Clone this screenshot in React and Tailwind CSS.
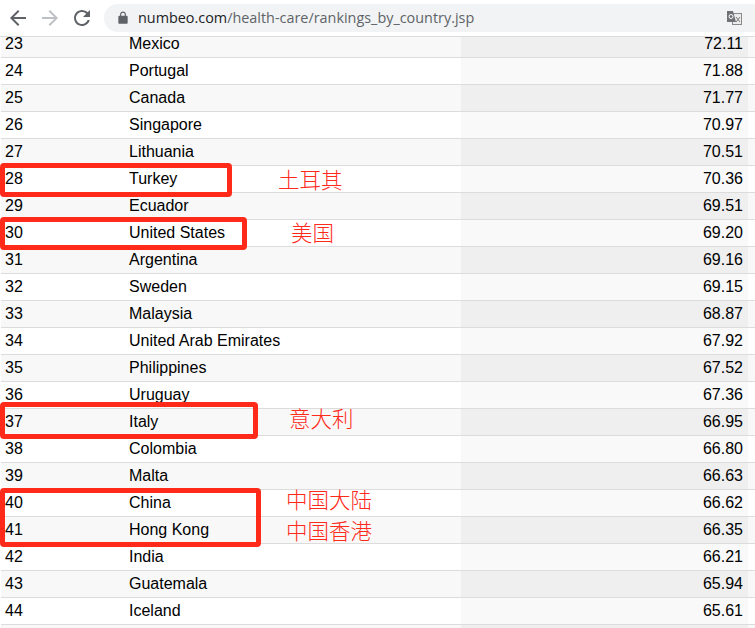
import React from "react";

const ROWS = [
  [23, "Mexico", "72.11"],
  [24, "Portugal", "71.88"],
  [25, "Canada", "71.77"],
  [26, "Singapore", "70.97"],
  [27, "Lithuania", "70.51"],
  [28, "Turkey", "70.36"],
  [29, "Ecuador", "69.51"],
  [30, "United States", "69.20"],
  [31, "Argentina", "69.16"],
  [32, "Sweden", "69.15"],
  [33, "Malaysia", "68.87"],
  [34, "United Arab Emirates", "67.92"],
  [35, "Philippines", "67.52"],
  [36, "Uruguay", "67.36"],
  [37, "Italy", "66.95"],
  [38, "Colombia", "66.80"],
  [39, "Malta", "66.63"],
  [40, "China", "66.62"],
  [41, "Hong Kong", "66.35"],
  [42, "India", "66.21"],
  [43, "Guatemala", "65.94"],
  [44, "Iceland", "65.61"],
  [45, "", ""],
];

// red marker boxes and labels drawn on top of the screenshot
const BOXES = [
  "left-0 top-[163px] w-[232px] h-[34px]",
  "left-0 top-[217px] w-[247px] h-[33px]",
  "left-0 top-[402px] w-[258px] h-[37px]",
  "left-0 top-[488px] w-[261px] h-[59px]",
];

const LABELS = [
  ["left-[278px] top-[166px]", "土耳其"],
  ["left-[291px] top-[219px]", "美国"],
  ["left-[289px] top-[405px]", "意大利"],
  ["left-[286px] top-[486px]", "中国大陆"],
  ["left-[286px] top-[517px]", "中国香港"],
];

function Row({ rank, name, value }) {
  const odd = rank % 2 === 1;
  return (
    <div className={`flex h-[27px] ml-px border-b border-[#dcdcdc] ${odd ? "bg-[#f8f8f8]" : "bg-white"}`}>
      <div className="w-[128px] pl-1 leading-[26px]">{name ? rank : ""}</div>
      <div className="w-[332px] leading-[26px]">{name}</div>
      <div className={`w-[287px] pr-[5px] text-right leading-[26px] ${odd ? "bg-[#efefef]" : "bg-[#f9f9f9]"}`}>{value}</div>
    </div>
  );
}

function Toolbar() {
  return (
    <div className="relative z-10 flex h-[37px] items-center bg-white border-b border-[#dadce0] pb-px">
      <svg className="ml-[6px] w-6 h-6" viewBox="0 0 24 24" fill="#5f6368">
        <path d="M20 11H7.83l5.59-5.59L12 4l-8 8 8 8 1.41-1.41L7.83 13H20v-2z" />
      </svg>
      <svg className="ml-2 w-6 h-6" viewBox="0 0 24 24" fill="#bdc1c6">
        <path d="M4 11h12.17l-5.59-5.59L12 4l8 8-8 8-1.41-1.41L16.17 13H4v-2z" />
      </svg>
      <svg className="ml-2 w-6 h-6" viewBox="0 0 24 24" fill="#5f6368">
        <path d="M17.65 6.35C16.2 4.9 14.21 4 12 4c-4.42 0-7.99 3.58-7.99 8s3.57 8 7.99 8c3.73 0 6.84-2.55 7.73-6h-2.08c-.82 2.33-3.04 4-5.65 4-3.31 0-6-2.69-6-6s2.69-6 6-6c1.66 0 3.14.69 4.22 1.78L13 11h7V4l-2.35 2.35z" />
      </svg>
      <div className="ml-[10px] flex flex-1 h-[28px] items-center rounded-l-full bg-[#f1f3f4]">
        <svg className="ml-[12px] w-[14px] h-[14px]" viewBox="0 0 24 24" fill="#5f6368">
          <path d="M18 8h-1V6c0-2.76-2.24-5-5-5S7 3.24 7 6v2H6c-1.1 0-2 .9-2 2v10c0 1.1.9 2 2 2h12c1.1 0 2-.9 2-2V10c0-1.1-.9-2-2-2zM9 6c0-1.66 1.34-3 3-3s3 1.34 3 3v2H9V6z" />
        </svg>
        <div className="ml-[8px] text-[14.4px] text-[#5f6368] font-['Open_Sans',sans-serif]">
          <span className="text-[#202124]">numbeo.com</span>/health-care/rankings_by_country.jsp
        </div>
        <svg className="ml-auto mr-[13px] w-[15px] h-[15px]" viewBox="0 0 15 15">
          <rect x="5.5" y="3.5" width="9" height="11" fill="#ececec" stroke="#8a8a8a" />
          <path d="M0 1h6l3 11H0z" fill="#6f7275" />
          <circle cx="4" cy="6.5" r="2" fill="none" stroke="#fff" />
          <path d="M9 7l4 5M13 7l-4 5" stroke="#777" />
        </svg>
      </div>
    </div>
  );
}

export default function App() {
  return (
    <div className="relative h-[628px] w-[755px] overflow-hidden bg-white text-black text-[16px] font-['Liberation_Sans',sans-serif]">
      <Toolbar />
      <div className="-mt-[6px]">
        {ROWS.map(([rank, name, value]) => (
          <Row key={rank} rank={rank} name={name} value={value} />
        ))}
      </div>
      {BOXES.map((b) => (
        <div key={b} className={`absolute ${b} rounded-[4px] border-[5px] border-[#ff2a1a]`} />
      ))}
      {LABELS.map(([pos, text]) => (
        <div
          key={text}
          className={`absolute ${pos} text-[21.5px] leading-[26px] text-[#ff2a1a] font-light font-['Noto_Sans_CJK_SC',sans-serif]`}
        >
          {text}
        </div>
      ))}
    </div>
  );
}
